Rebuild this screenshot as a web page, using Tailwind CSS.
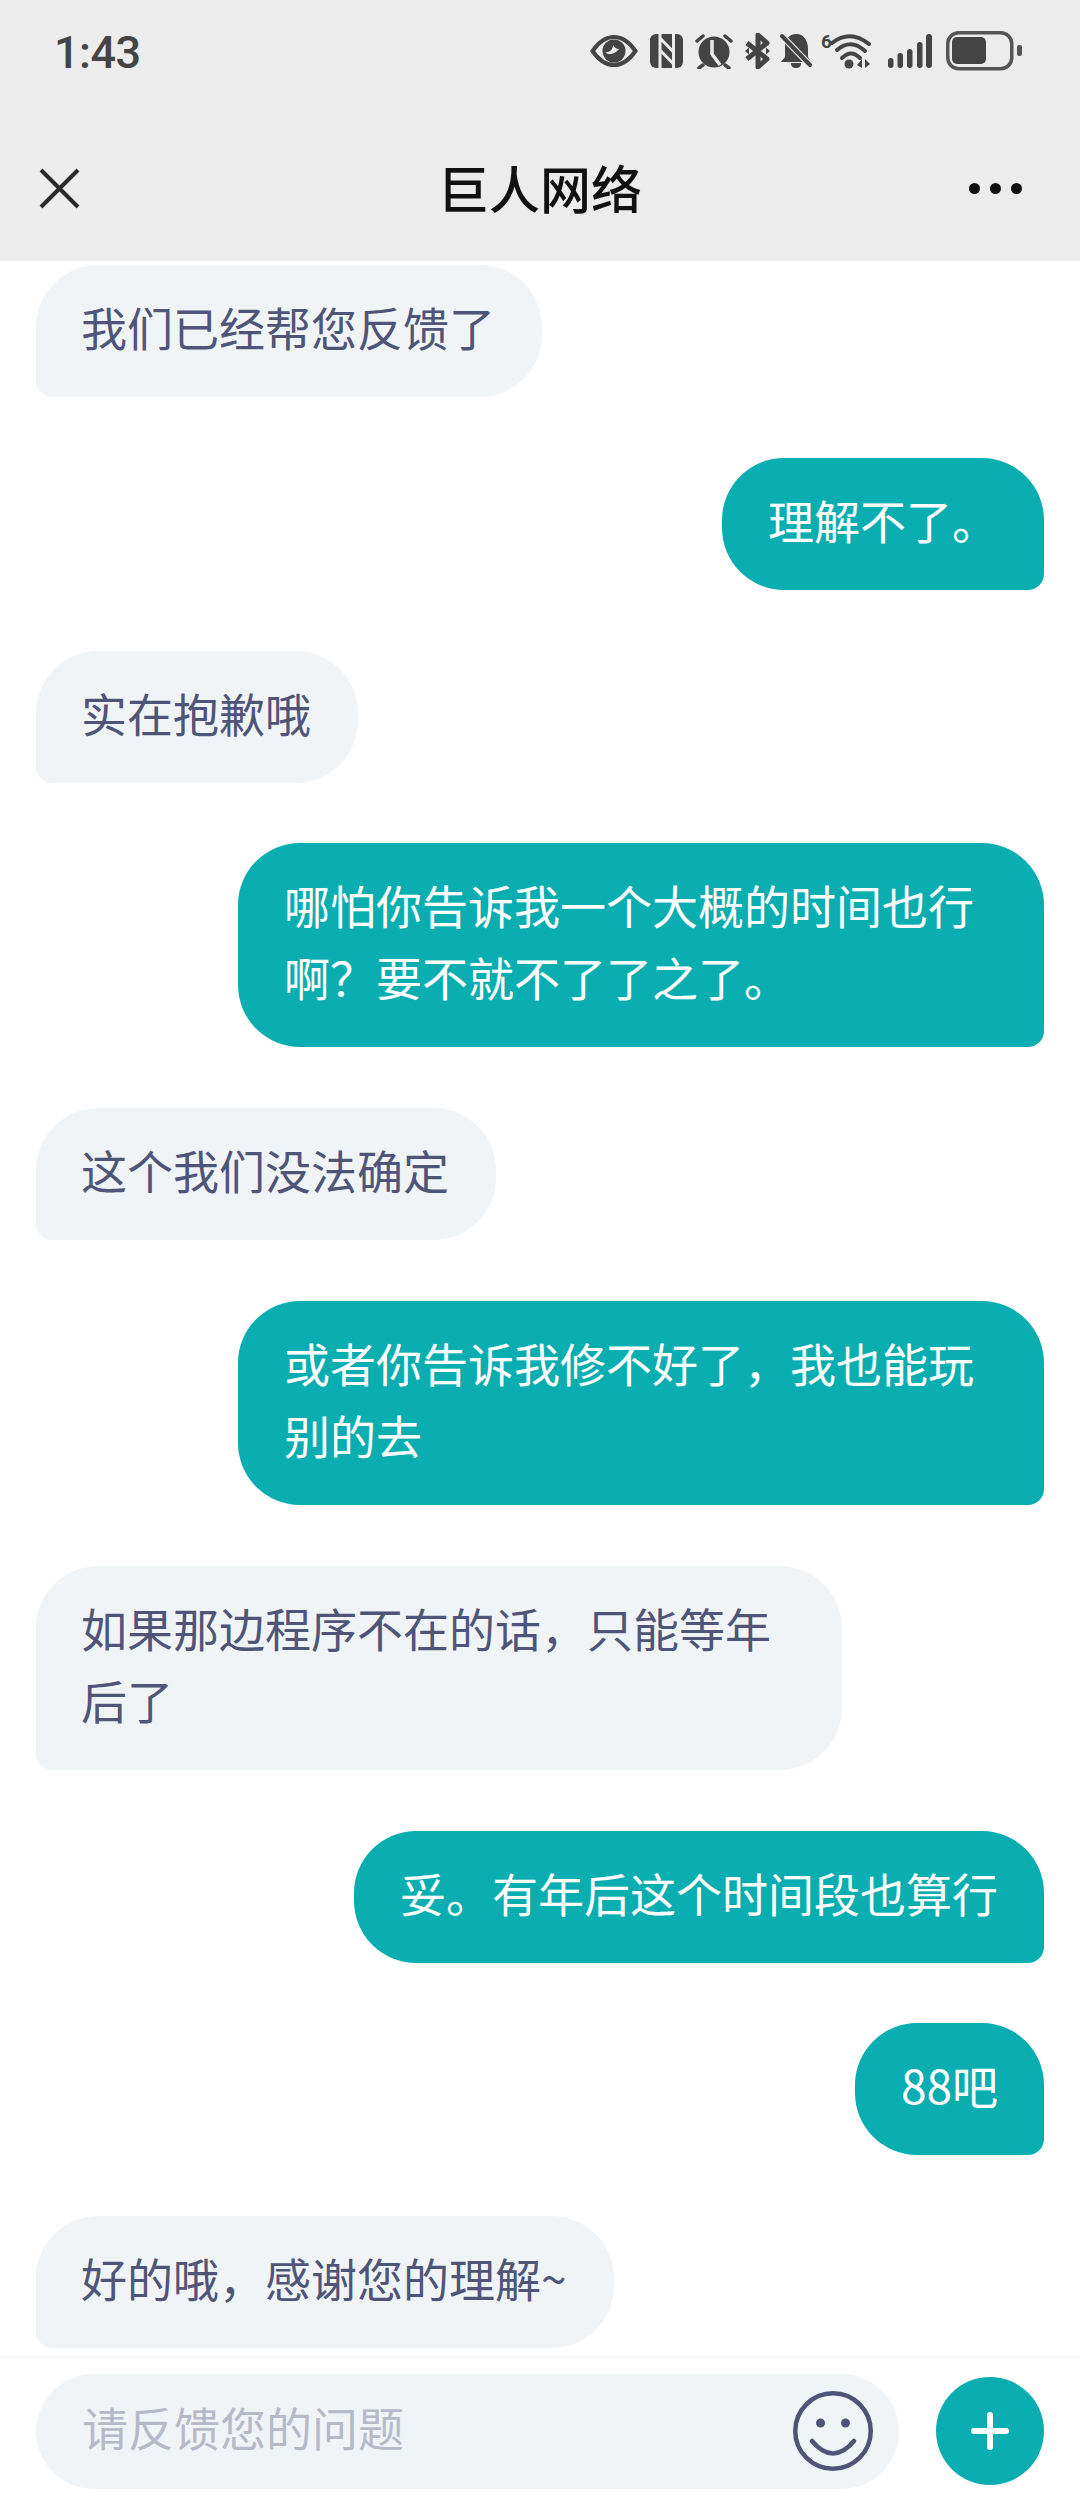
<!DOCTYPE html>
<html lang="zh-CN">
<head>
    <meta charset="UTF-8">
    <meta name="viewport" content="width=device-width, initial-scale=1.0">
    <title>巨人网络</title>
    <script src="https://cdn.jsdelivr.net/npm/@tailwindcss/browser@4"></script>
</head>

<body class="bg-white">
<div class="h-[2504px] w-[1080px] flex flex-col overflow-hidden font-['Noto_Sans_CJK_SC',sans-serif]">

    <!-- Status bar and title -->
    <header class="h-[261px] bg-[#ececec] shrink-0 flex flex-col">
        <div class="h-[103px] pl-[54px] pt-[25px] pr-[58px] flex justify-between">
            <span class="font-['Roboto',sans-serif] font-medium text-[45px] leading-[56px] text-[#444444] tracking-[-0.5px]">1:43</span>
            <div class="flex items-center h-[40px] mt-[6px]">
                <!-- eye -->
                <svg class="w-[48px] h-[34px]" viewBox="0 0 48 34" fill="none">
                    <path d="M2.5 17C10 6 17 3 24 3s14 3 21.5 14C38 28 31 31 24 31S10 28 2.5 17z" stroke="#444" stroke-width="4"/>
                    <circle cx="24" cy="17" r="11.5" fill="#444"/>
                    <path d="M15 18c4 1 8-2 8-7 1 2 3 4 6 4-2 3-9 8-14 3z" fill="#ececec"/>
                </svg>
                <!-- nfc -->
                <svg class="w-[33px] h-[34px] ml-[12px]" viewBox="0 0 33 34">
                    <rect width="33" height="34" rx="6" fill="#444"/>
                    <path d="M10 0v34M23.5 0v34M10 4l13.5 14M10 16l13.5 14" stroke="#ececec" stroke-width="3" fill="none"/>
                </svg>
                <!-- alarm -->
                <svg class="w-[38px] h-[36px] ml-[12px]" viewBox="0 0 38 36" fill="none">
                    <circle cx="19" cy="19" r="15.5" fill="#444"/>
                    <path d="M17 7v14l8 11" stroke="#ececec" stroke-width="3.5"/>
                    <path d="M2 8l6-5M36 8l-6-5M8 32l-4 3M30 32l4 3" stroke="#444" stroke-width="3.5" stroke-linecap="round"/>
                </svg>
                <!-- bluetooth -->
                <svg class="w-[25px] h-[36px] ml-[12px]" viewBox="0 0 25 36" fill="none">
                    <path d="M2 10l20 16-9 8V2l9 8L2 26" stroke="#444" stroke-width="5" stroke-linejoin="round"/>
                    <path d="M0 18l4-3.5v7zM25 18l-4-3.5v7z" fill="#444"/>
                </svg>
                <!-- bell off -->
                <svg class="w-[32px] h-[36px] ml-[10px]" viewBox="0 0 32 36" fill="none">
                    <path d="M16 1c9 0 12 8 12 15v8l3 5H1l4-5V14C5 7 9 1 16 1z" fill="#444"/>
                    <path d="M11 30h10c0 4-2 5-5 5s-5-1-5-5z" fill="#444"/>
                    <path d="M2 3l28 29" stroke="#ececec" stroke-width="6.5"/>
                    <path d="M2 3l28 29" stroke="#444" stroke-width="4" stroke-linecap="round"/>
                </svg>
                <!-- wifi 6 -->
                <svg class="w-[50px] h-[38px] ml-[9px] overflow-visible" viewBox="0 0 50 38" fill="none">
                    <text x="0" y="16" font-family="Roboto" font-size="19" font-weight="700" fill="#444">6</text>
                    <path d="M11 11Q29 -3 48 12M16 18Q30 6 44 19M21 26Q30 17 39 26" stroke="#444" stroke-width="4" stroke-linecap="round"/>
                    <circle cx="28" cy="32" r="4.5" fill="#444"/>
                    <path d="M41 27v9l-5-3zM44 27v9l5-4z" fill="#444"/>
                </svg>
                <!-- signal -->
                <svg class="w-[45px] h-[36px] ml-[17px]" viewBox="0 0 45 36" fill="#444">
                    <rect x="0" y="25" width="5.5" height="10" rx="2.75"/>
                    <rect x="9.5" y="20" width="5.5" height="15" rx="2.75"/>
                    <rect x="19" y="16" width="5.5" height="19" rx="2.75"/>
                    <rect x="29" y="9" width="5.5" height="26" rx="2.75"/>
                    <rect x="38" y="1" width="6" height="34" rx="3"/>
                </svg>
                <!-- battery -->
                <svg class="w-[76px] h-[40px] ml-[13px]" viewBox="0 0 76 40" fill="none">
                    <rect x="1.75" y="1.75" width="64" height="36" rx="11" stroke="#555" stroke-width="3.5"/>
                    <rect x="6" y="6" width="34" height="27" rx="5" fill="#444"/>
                    <rect x="71" y="14" width="5" height="11" rx="2" fill="#555"/>
                </svg>
            </div>
        </div>
        <div class="flex-1 relative flex items-center justify-center pt-[10px]">
            <svg class="absolute left-[39px] top-[65px] w-[41px] h-[41px]" viewBox="0 0 41 41" fill="none">
                <path d="M2 2l37 37M39 2L2 39" stroke="#2a2a2a" stroke-width="4"/>
            </svg>
            <h1 class="text-[51px] leading-[60px] font-medium text-[#111111]">巨人网络</h1>
            <div class="absolute left-[969px] top-[80px] flex gap-[10px]">
                <span class="w-[11px] h-[11px] rounded-full bg-[#111111]"></span>
                <span class="w-[11px] h-[11px] rounded-full bg-[#111111]"></span>
                <span class="w-[11px] h-[11px] rounded-full bg-[#111111]"></span>
            </div>
        </div>
    </header>

    <!-- Conversation -->
    <main class="flex-1 px-[36px] pt-[4px] flex flex-col gap-[60.8px] text-[46px] leading-[72px]">
        <div class="self-start max-w-[806px] bg-[#f1f4f7] text-[#4f5578] pl-[45px] pr-[47px] pt-[25px] pb-[35px] rounded-[62px] rounded-bl-[16px]">我们已经帮您反馈了</div>
        <div class="self-end max-w-[806px] bg-[#0aaeb0] text-white pl-[46px] pr-[46px] pt-[25px] pb-[35px] rounded-[62px] rounded-br-[16px]">理解不了。</div>
        <div class="self-start max-w-[806px] bg-[#f1f4f7] text-[#4f5578] pl-[45px] pr-[47px] pt-[25px] pb-[35px] rounded-[62px] rounded-bl-[16px]">实在抱歉哦</div>
        <div class="self-end w-[806px] bg-[#0aaeb0] text-white pl-[46px] pr-[46px] pt-[25px] pb-[35px] rounded-[62px] rounded-br-[16px]">哪怕你告诉我一个大概的时间也行啊？要不就不了了之了。</div>
        <div class="self-start max-w-[806px] bg-[#f1f4f7] text-[#4f5578] pl-[45px] pr-[47px] pt-[25px] pb-[35px] rounded-[62px] rounded-bl-[16px]">这个我们没法确定</div>
        <div class="self-end w-[806px] bg-[#0aaeb0] text-white pl-[46px] pr-[46px] pt-[25px] pb-[35px] rounded-[62px] rounded-br-[16px]">或者你告诉我修不好了，我也能玩别的去</div>
        <div class="self-start w-[806px] bg-[#f1f4f7] text-[#4f5578] pl-[45px] pr-[47px] pt-[25px] pb-[35px] rounded-[62px] rounded-bl-[16px]">如果那边程序不在的话，只能等年后了</div>
        <div class="self-end max-w-[806px] bg-[#0aaeb0] text-white pl-[46px] pr-[46px] pt-[25px] pb-[35px] rounded-[62px] rounded-br-[16px]">妥。有年后这个时间段也算行</div>
        <div class="self-end max-w-[806px] bg-[#0aaeb0] text-white pl-[46px] pr-[46px] pt-[25px] pb-[35px] rounded-[62px] rounded-br-[16px]">88吧</div>
        <div class="self-start max-w-[806px] bg-[#f1f4f7] text-[#4f5578] pl-[45px] pr-[47px] pt-[25px] pb-[35px] rounded-[62px] rounded-bl-[16px]">好的哦，感谢您的理解~</div>
    </main>

    <!-- Input bar -->
    <footer class="h-[148px] shrink-0 border-t-2 border-[#f5f6f8] pl-[36px] pr-[36px] flex items-center justify-between">
        <div class="w-[863px] h-[115px] rounded-[58px] bg-[#f1f4f7] pl-[46px] pr-[26px] flex items-center justify-between">
            <span class="text-[46px] text-[#b6bac8] mb-[10px]">请反馈您的问题</span>
            <svg class="w-[80px] h-[80px]" viewBox="0 0 80 80" fill="none">
                <circle cx="40" cy="40" r="37.75" stroke="#4f5578" stroke-width="4.5"/>
                <circle cx="27.5" cy="32" r="4.5" fill="#4f5578"/>
                <circle cx="52.5" cy="32" r="4.5" fill="#4f5578"/>
                <path d="M19 50Q40 75 61 50" stroke="#4f5578" stroke-width="4.5" stroke-linecap="round"/>
            </svg>
        </div>
        <button class="w-[108px] h-[108px] rounded-full bg-[#0aaeb0] flex items-center justify-center">
            <svg class="w-[38px] h-[38px]" viewBox="0 0 38 38" fill="none">
                <path d="M19 3v32M3 19h32" stroke="#fff" stroke-width="6" stroke-linecap="round"/>
            </svg>
        </button>
    </footer>
</div>
</body>
</html>
